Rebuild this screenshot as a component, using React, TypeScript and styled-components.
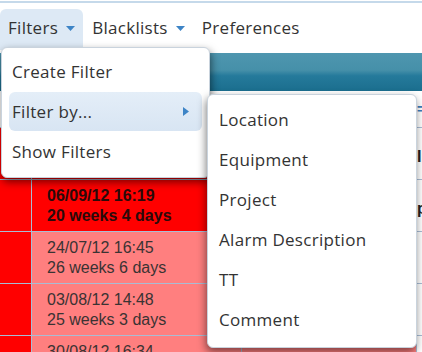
import React from 'react';
import styled, { createGlobalStyle } from 'styled-components';

type Row = {
  date: string,
  age: string,
  urgent: boolean,
  extra: string,
};

// first row sits under the open menu, so only its right-hand cell shows
const rows: Row[] = [
  { date: '', age: '', urgent: true, extra: 'Intake' },
  { date: '06/09/12 16:19', age: '20 weeks 4 days', urgent: true, extra: 'pending' },
  { date: '24/07/12 16:45', age: '26 weeks 6 days', urgent: false, extra: '' },
  { date: '03/08/12 14:48', age: '25 weeks 3 days', urgent: false, extra: '' },
  { date: '30/08/12 16:34', age: '21 weeks 5 days', urgent: false, extra: '' },
];

const filterItems = ['Location', 'Equipment', 'Project', 'Alarm Description', 'TT', 'Comment'];

const GlobalStyle = createGlobalStyle`
  body {
    margin: 0;
    background: #ffffff;
    overflow: hidden;
  }
`;

const Caret = () => (
  <CaretIcon width="9" height="5" viewBox="0 0 9 5">
    <path d="M0 0 L9 0 L4.5 5 Z" fill="#3d84c6" />
  </CaretIcon>
);

const App = () => {
  return (
    <Page>
      <GlobalStyle />
      <TopRule />
      <NavBar>
        <NavTab active>
          Filters <Caret />
        </NavTab>
        <NavTab>
          Blacklists <Caret />
        </NavTab>
        <NavTab>Preferences</NavTab>
      </NavBar>

      <Grid>
        <HeaderRow />
        <FilterRow>
          <FilterMark>=</FilterMark>
        </FilterRow>
        {rows.map((row, i) => (
          <TableRow key={i}>
            <FlagCell />
            <DateCell urgent={row.urgent}>
              <div>{row.date}</div>
              <div>{row.age}</div>
            </DateCell>
            <MidCell urgent={row.urgent} />
            <ExtraCell urgent={row.urgent}>{row.extra}</ExtraCell>
          </TableRow>
        ))}
      </Grid>

      <Menu>
        <MenuItem>Create Filter</MenuItem>
        <MenuItem active>
          Filter by...
          <svg width="6" height="9" viewBox="0 0 6 9">
            <path d="M0 0 L6 4.5 L0 9 Z" fill="#3d84c6" />
          </svg>
        </MenuItem>
        <MenuItem>Show Filters</MenuItem>
      </Menu>

      <SubMenu>
        {filterItems.map((item) => (
          <SubMenuItem key={item}>{item}</SubMenuItem>
        ))}
      </SubMenu>
    </Page>
  );
};

const Page = styled.div`
  position: relative;
  width: 422px;
  height: 352px;
  overflow: hidden;
  font-family: "Open Sans", "Noto Sans", sans-serif;
  color: #333;
`;

const TopRule = styled.div`
  margin-top: 1px;
  height: 2px;
  background: #c5d9ea;
`;

const NavBar = styled.div`
  display: flex;
  align-items: flex-end;
  height: 47px;
  gap: 1px;
`;

const NavTab = styled.div<{ active?: boolean }>`
  display: flex;
  align-items: center;
  gap: 8px;
  height: 41px;
  padding: 0 8px 5px;
  box-sizing: border-box;
  font-size: 17px;
  letter-spacing: 0.3px;
  border-radius: 6px 6px 0 0;
  background: ${(p) => (p.active ? '#dde9f5' : 'transparent')};
`;

const CaretIcon = styled.svg`
  margin-top: 2px;
`;

const Grid = styled.div`
  margin-top: 3px;
  font-family: "Liberation Sans", Arial, sans-serif;
`;

const HeaderRow = styled.div`
  height: 38px;
  background: linear-gradient(#4e96af 0%, #4690a9 45%, #257a9b 60%, #1b6e8e 100%);
`;

const FilterRow = styled.div`
  height: 36px;
  border-bottom: 1px solid #a9bcd4;
  display: flex;
  justify-content: flex-end;
  align-items: center;
`;

const FilterMark = styled.span`
  color: #3d7fbf;
  font-size: 14px;
  font-weight: bold;
  width: 5px;
  overflow: hidden;
`;

const TableRow = styled.div`
  display: grid;
  grid-template-columns: 32px 210px 175px 1fr;
  height: 51px;
  border-bottom: 1px solid #a9bcd4;
`;

const FlagCell = styled.div`
  background: #ff0000;
  border-right: 1px solid #a9bcd4;
`;

const DateCell = styled.div<{ urgent: boolean }>`
  background: ${(p) => (p.urgent ? '#ff0000' : '#ff7f7f')};
  padding: 6px 0 0 15px;
  font-size: 16px;
  line-height: 20px;
  font-weight: ${(p) => (p.urgent ? 'bold' : 'normal')};
  color: ${(p) => (p.urgent ? '#2a0a0a' : '#3a3333')};
  border-right: 1px solid #a9bcd4;
`;

const MidCell = styled.div<{ urgent: boolean }>`
  background: ${(p) => (p.urgent ? '#ff0000' : '#ff7f7f')};
  border-right: 1px solid #a9bcd4;
`;

const ExtraCell = styled.div<{ urgent: boolean }>`
  background: #ffffff;
  padding: 20px 0 0 0;
  font-size: 16px;
  font-weight: ${(p) => (p.urgent ? 'bold' : 'normal')};
  color: #222;
  white-space: nowrap;
  overflow: hidden;
`;

const Menu = styled.div`
  position: absolute;
  left: 1px;
  top: 47px;
  width: 209px;
  box-sizing: border-box;
  padding: 4px 7px 5px;
  background: #ffffff;
  border: 1px solid #c9d3dd;
  border-radius: 6px;
  box-shadow: 1px 4px 8px rgba(0, 0, 0, 0.55);
`;

const MenuItem = styled.div<{ active?: boolean }>`
  display: flex;
  align-items: center;
  justify-content: space-between;
  height: 39px;
  padding: 0 13px 0 3px;
  margin-bottom: 1px;
  font-size: 17px;
  letter-spacing: 0.3px;
  border-radius: 6px;
  background: ${(p) => (p.active ? 'linear-gradient(#e4eef8, #d8e5f3)' : 'transparent')};
`;

const SubMenu = styled.div`
  position: absolute;
  left: 207px;
  top: 94px;
  width: 210px;
  height: 254px;
  box-sizing: border-box;
  padding: 4px 0 7px;
  background: #ffffff;
  border: 1px solid #c9d3dd;
  border-radius: 6px;
  box-shadow: -1px 4px 8px rgba(0, 0, 0, 0.5);
`;

const SubMenuItem = styled.div`
  display: flex;
  align-items: center;
  height: 40px;
  padding-left: 11px;
  font-size: 17px;
  letter-spacing: 0.3px;
`;

export default App;
